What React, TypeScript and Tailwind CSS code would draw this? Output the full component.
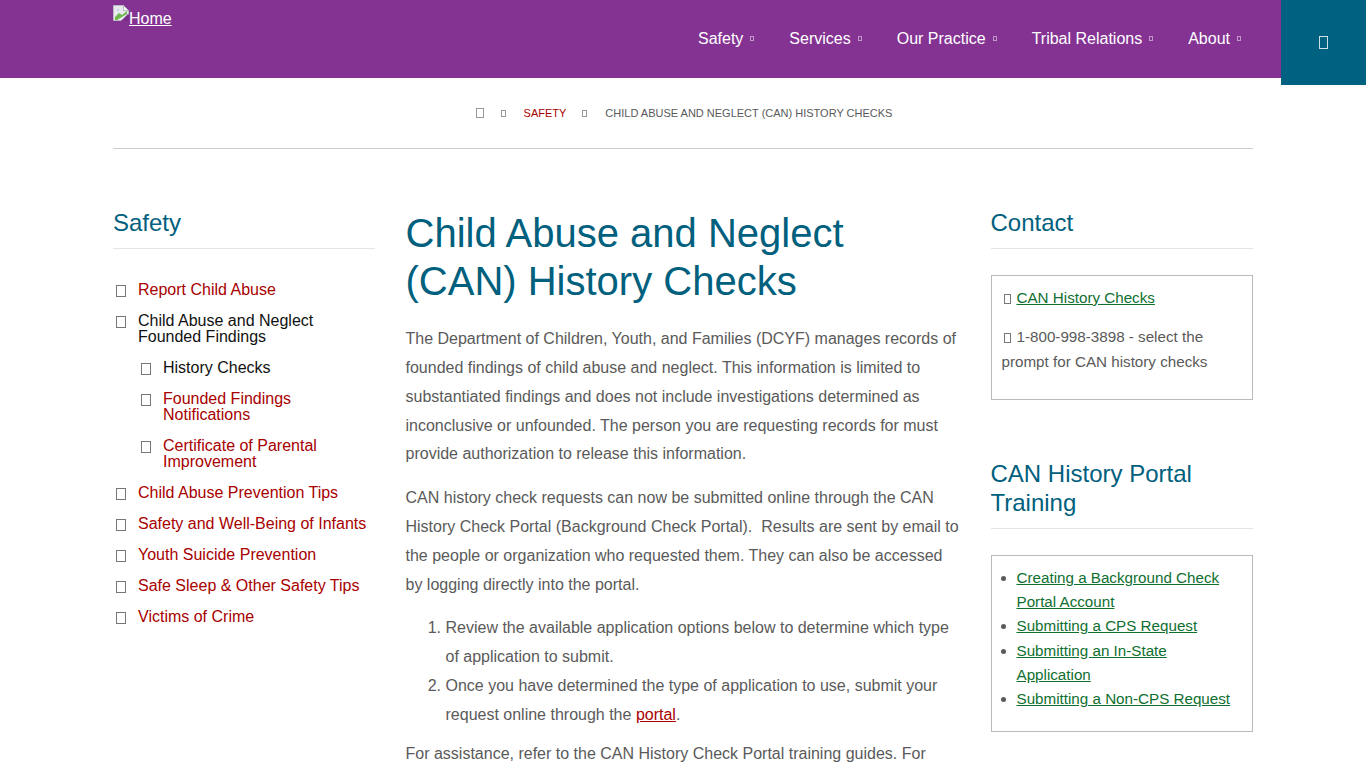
function Box({ className }: { className: string }) {
  return <span className={`inline-block shrink-0 border ${className}`} />;
}

function BrokenImage() {
  return (
    <svg width="16" height="16" viewBox="0 0 16 16" className="shrink-0">
      <path d="M0.5 0.5H10.5L15.5 5.5V15.5H0.5Z" fill="#e8e8ee" stroke="#b9b9c0" />
      <path d="M10.5 0.5V5.5H15.5Z" fill="#fff" stroke="#b9b9c0" />
      <path d="M2 12L6 8L9 10L14 6V9L4 15H2Z" fill="#6fb64f" />
      <path d="M8 16L15 9L16 10V16Z" fill="#7a2c8a" />
      <circle cx="5" cy="5" r="1.5" fill="#cfd8ea" />
    </svg>
  );
}

const navItems = ["Safety", "Services", "Our Practice", "Tribal Relations", "About"];

function Header() {
  return (
    <header className="flex h-[78px] items-start bg-[#843393]">
      <a href="#" className="mt-[5px] ml-[113px] flex h-[26px] items-start text-white underline">
        <BrokenImage />
        <span className="leading-[28px]">Home</span>
      </a>
      <nav className="mt-[27px] ml-auto flex gap-[35px] pr-[40px]">
        {navItems.map((item) => (
          <a key={item} href="#" className="flex items-center leading-6 text-white">
            {item}
            <Box className="mt-[-1px] ml-[7px] h-[5px] w-[4px] border-white/50" />
          </a>
        ))}
      </nav>
      <button type="button" className="flex h-[85px] w-[85px] shrink-0 items-center justify-center bg-[#006280]">
        <Box className="h-[13px] w-[9px] border-white/80" />
      </button>
    </header>
  );
}

function Breadcrumb() {
  return (
    <div className="mx-[113px] flex h-[71px] items-center justify-center border-b border-[#cccccc] pt-[1px] pl-[2px] text-[11px] uppercase text-[#5a5a5a]">
      <Box className="mt-[-2px] h-[10px] w-[8px] border-[#999]" />
      <Box className="mt-[-1px] ml-[17px] h-[7px] w-[5px] border-[#999]" />
      <a href="#" className="ml-[18px] text-[#a80000]">Safety</a>
      <Box className="mt-[-1px] ml-[16px] h-[7px] w-[5px] border-[#999]" />
      <span className="ml-[18px]">Child Abuse and Neglect (CAN) History Checks</span>
    </div>
  );
}

function SideLink({ label, active, indent }: { label: string; active?: boolean; indent?: boolean }) {
  return (
    <li className={`flex ${indent ? "pl-[25px]" : ""}`}>
      <Box className="mt-[3px] ml-[3px] h-[12px] w-[10px] border-[#777]" />
      <a href="#" className={`ml-[12px] leading-4 ${active ? "text-[#111]" : "text-[#a80000]"}`}>
        {label}
      </a>
    </li>
  );
}

function SideNav() {
  return (
    <aside className="w-[262.5px] shrink-0">
      <h2 className="mt-[-1px] mr-[0.5px] border-b border-[#e5e5e5] pb-[11px] text-2xl leading-[29px] text-[#00607d]">Safety</h2>
      <ul className="mt-[33px] flex flex-col gap-[15px]">
        <SideLink label="Report Child Abuse" />
        <SideLink label="Child Abuse and Neglect Founded Findings" active />
        <SideLink label="History Checks" active indent />
        <SideLink label="Founded Findings Notifications" indent />
        <SideLink label="Certificate of Parental Improvement" indent />
        <SideLink label="Child Abuse Prevention Tips" />
        <SideLink label="Safety and Well-Being of Infants" />
        <SideLink label="Youth Suicide Prevention" />
        <SideLink label="Safe Sleep & Other Safety Tips" />
        <SideLink label="Victims of Crime" />
      </ul>
    </aside>
  );
}

function MainContent() {
  return (
    <main className="ml-[30px] w-[555px] shrink-0 leading-[28.8px] text-[#5a5a5a]">
      <h1 className="text-[40px] leading-[48px] text-[#00607d]">
        Child Abuse and Neglect (CAN) History Checks
      </h1>
      <p className="mt-[20.2px]">
        The Department of Children, Youth, and Families (DCYF) manages records of founded findings of child abuse and
        neglect. This information is limited to substantiated findings and does not include investigations determined
        as inconclusive or unfounded. The person you are requesting records for must provide authorization to release
        this information.
      </p>
      <p className="mt-[15px]">
        CAN history check requests can now be submitted online through the CAN History Check Portal (Background Check
        Portal).&nbsp; Results are sent by email to the people or organization who requested them. They can also be
        accessed by logging directly into the portal.
      </p>
      <ol className="mt-[15px] list-decimal pl-10">
        <li>Review the available application options below to determine which type of application to submit.</li>
        <li>
          Once you have determined the type of application to use, submit your request online through the{" "}
          <a href="#" className="text-[#a80000] underline">portal</a>.
        </li>
      </ol>
      <p className="mt-[10px]">
        For assistance, refer to the CAN History Check Portal training guides. For additional help, contact the
        Background Check Unit.
      </p>
    </main>
  );
}

function RightColumn() {
  const linkClass = "text-[#0f6f30] underline";
  return (
    <aside className="ml-[30px] w-[262.5px] shrink-0">
      <h2 className="mt-[-1px] border-b border-[#e5e5e5] pb-[11px] text-2xl leading-[29px] text-[#00607d]">Contact</h2>
      <div className="mt-[26px] h-[125px] border border-[#bbb] px-[10px] pt-[9px] text-[15.2px] leading-[25px] text-[#5a5a5a]">
        <p>
          <Box className="mr-[6px] mb-[-1px] ml-[2px] h-[10px] w-[7px] border-[#777]" />
          <a href="#" className={linkClass}>CAN History Checks</a>
        </p>
        <p className="mt-[14px]">
          <Box className="mr-[6px] mb-[-1px] ml-[2px] h-[10px] w-[7px] border-[#777]" />
          1-800-998-3898 - select the prompt for CAN history checks
        </p>
      </div>
      <h2 className="mt-[59px] border-b border-[#e5e5e5] pb-[11px] text-2xl leading-[29px] text-[#00607d]">
        CAN History Portal Training
      </h2>
      <div className="mt-[26px] border border-[#bbb] pt-[9.8px] pr-[10px] pb-[19.5px] pl-[25px] text-[15.2px] leading-[24.32px] text-[#5a5a5a]">
        <ul className="list-disc">
          <li><a href="#" className={linkClass}>Creating a Background Check Portal Account</a></li>
          <li><a href="#" className={linkClass}>Submitting a CPS Request</a></li>
          <li><a href="#" className={linkClass}>Submitting an In-State Application</a></li>
          <li><a href="#" className={linkClass}>Submitting a Non-CPS Request</a></li>
        </ul>
      </div>
    </aside>
  );
}

export default function App() {
  return (
    <div className="h-screen overflow-hidden bg-white font-['Liberation_Sans',Arial,sans-serif] text-base">
      <Header />
      <Breadcrumb />
      <div className="mt-[60px] flex px-[113px]">
        <SideNav />
        <MainContent />
        <RightColumn />
      </div>
    </div>
  );
}
